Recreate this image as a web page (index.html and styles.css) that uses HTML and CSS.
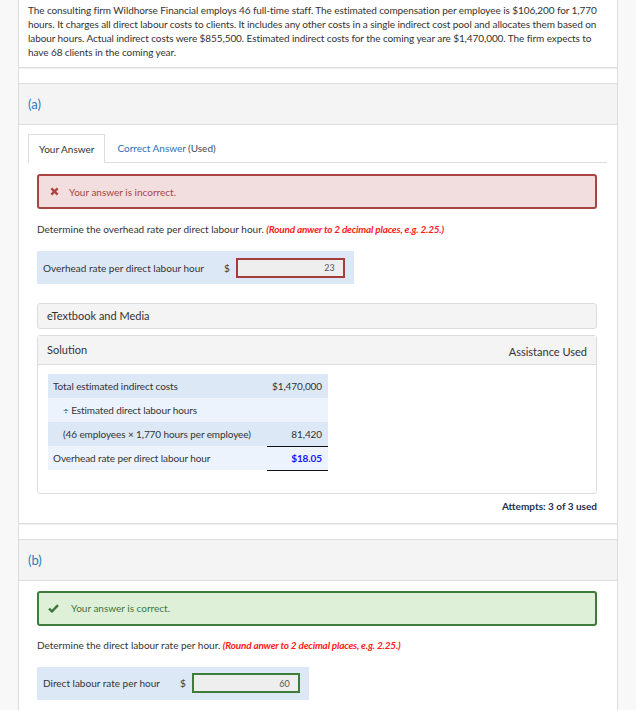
FILE: index.html
```html
<!DOCTYPE html>
<html>
<head>
<meta charset="utf-8">
<link rel="stylesheet" href="styles.css">
</head>
<body>
<div class="wrap">
  <div class="card intro">
    <p><span class="ln">The consulting firm Wildhorse Financial employs 46 full-time staff. The estimated compensation per employee is $106,200 for 1,770</span>
    <span class="ln">hours. It charges all direct labour costs to clients. It includes any other costs in a single indirect cost pool and allocates them based on</span>
    <span class="ln">labour hours. Actual indirect costs were $855,500. Estimated indirect costs for the coming year are $1,470,000. The firm expects to</span>
    <span class="ln">have 68 clients in the coming year.</span></p>
  </div>

  <div class="card part">
    <div class="part-head">(a)</div>
    <div class="part-body">
      <div class="tabs">
        <div class="tab active">Your Answer</div>
        <div class="tab link"><span class="blue">Correct Answer</span> <span class="used">(Used)</span></div>
      </div>
      <div class="tab-panel">
        <div class="alert alert-bad">
          <svg class="icon" width="9" height="9" viewBox="0 0 10 10"><path d="M1.5 1.5 L8.5 8.5 M8.5 1.5 L1.5 8.5" stroke="#a94442" stroke-width="2.6" stroke-linecap="butt" fill="none"/></svg>
          <span>Your answer is incorrect.</span>
        </div>
        <p class="question">Determine the overhead rate per direct labour hour. <em class="hint">(Round anwer to 2 decimal places, e.g. 2.25.)</em></p>
        <div class="answer-row">
          <span class="label">Overhead rate per direct labour hour</span>
          <span class="dollar">$</span>
          <input class="field field-bad" value="23" readonly>
        </div>

        <div class="panel etext">eTextbook and Media</div>

        <div class="panel solution">
          <div class="sol-head"><span>Solution</span><span class="assist">Assistance Used</span></div>
          <div class="sol-body">
            <table class="sol-table">
              <tr class="r1"><td>Total estimated indirect costs</td><td class="num">$1,470,000</td></tr>
              <tr class="r2"><td class="indent">÷ Estimated direct labour hours</td><td class="num"></td></tr>
              <tr class="r1"><td class="indent">(46 employees × 1,770 hours per employee)</td><td class="num">81,420</td></tr>
              <tr class="r2"><td>Overhead rate per direct labour hour</td><td class="num total">$18.05</td></tr>
            </table>
          </div>
        </div>

        <div class="attempts">Attempts: 3 of 3 used</div>
      </div>
    </div>
  </div>

  <div class="card part part-b">
    <div class="part-head">(b)</div>
    <div class="part-body plain">
      <div class="alert alert-good">
        <svg class="icon" width="11" height="9" viewBox="0 0 11 9"><path d="M1 4.6 L4 7.4 L10 1.2" stroke="#3c763d" stroke-width="2.4" fill="none"/></svg>
        <span>Your answer is correct.</span>
      </div>
      <p class="question q-b">Determine the direct labour rate per hour. <em class="hint">(Round anwer to 2 decimal places, e.g. 2.25.)</em></p>
      <div class="answer-row">
        <span class="label">Direct labour rate per hour</span>
        <span class="dollar">$</span>
        <input class="field field-good" value="60" readonly>
      </div>
    </div>
  </div>
</div>
</body>
</html>
```

FILE: styles.css
```css
html, body {
  margin: 0;
  padding: 0;
}
body {
  background: #f8f8f8;
  font-family: Lato, "Noto Sans", sans-serif;
  color: #333;
  font-size: 10px;
  line-height: 14px;
}
.wrap {
  margin-left: 18px;
  width: 598px;
  background: #fff;
  border-left: 1px solid #ddd;
  border-right: 1px solid #ddd;
  height: 710px;
  overflow: hidden;
}
.card {
  background: #fff;
  border-bottom: 1px solid #dcdcdc;
  box-shadow: 0 1px 1px rgba(0,0,0,0.06);
}
.intro {
  padding: 3px 8px 8px 9px;
}
.intro p {
  margin: 0;
  font-size: 10px;
  line-height: 14px;
  letter-spacing: -0.08px;
}
.intro .ln {
  display: block;
  white-space: nowrap;
}
.part {
  margin-top: 15px;
  border-top: 1px solid #ddd;
}
.part-head {
  height: 40px;
  background: #f4f4f4;
  border-bottom: 1px solid #ddd;
  padding-left: 9px;
  display: flex;
  align-items: center;
  font-size: 13px;
  color: #2c7bbf;
}
.part-body {
  padding: 9px 10px 10px 9px;
}
.part-body.plain {
  padding: 10px 20px 10px 18px;
}
.tabs {
  display: flex;
  height: 28px;
  border-bottom: 1px solid #ddd;
}
.tab {
  display: flex;
  align-items: center;
  padding: 0 10px;
  font-size: 10px;
}
.tab.active {
  border: 1px solid #ddd;
  border-bottom: none;
  background: #fff;
  margin-bottom: -1px;
  height: 29px;
  box-sizing: border-box;
  padding: 0 10px;
}
.tab.link {
  padding-left: 12px;
}
.blue {
  color: #2a6fb8;
}
.used {
  color: #3d4b5c;
  margin-left: 2px;
}
.tab-panel {
  padding: 11px 10px 0 9px;
}
.alert {
  height: 35px;
  box-sizing: border-box;
  border: 2px solid;
  border-radius: 3px;
  display: flex;
  align-items: center;
  font-size: 10px;
}
.alert-bad {
  background: #f2dede;
  border-color: #a94442;
  color: #a94442;
  padding-left: 11px;
}
.alert-bad .icon {
  margin-right: 10px;
}
.alert-good {
  background: #dff0d8;
  border-color: #3f7b3a;
  color: #3c763d;
  padding-left: 9px;
}
.alert-good .icon {
  margin-right: 12px;
}
.question {
  margin: 13px 0 0 0;
  font-size: 10px;
  line-height: 14px;
}
.q-b {
  margin-top: 12px;
}
.hint {
  color: #ff1a1a;
  font-weight: bold;
  font-style: italic;
  letter-spacing: -0.2px;
}
.answer-row {
  margin-top: 15px;
  display: flex;
  width: max-content;
  align-items: center;
  height: 33px;
  background: #dde8f7;
  padding: 0 9px 0 6px;
}
.label {
  font-size: 10px;
}
.dollar {
  margin-left: 20px;
  margin-right: 6px;
  font-size: 10px;
}
.field {
  width: 109px;
  height: 20px;
  box-sizing: border-box;
  background: #eee;
  text-align: right;
  font-family: Lato, sans-serif;
  font-size: 9px;
  color: #555;
  padding: 0 8px 0 0;
  margin: 0;
  outline: none;
}
.field-bad {
  border: 2px solid #a63b3b;
}
.field-good {
  border: 2px solid #3f7b3a;
  width: 108px;
}
.panel {
  border: 1px solid #ddd;
  border-radius: 3px;
  font-size: 11px;
}
.etext {
  margin-top: 19px;
  height: 26px;
  box-sizing: border-box;
  background: #f4f4f4;
  display: flex;
  align-items: center;
  padding-left: 9px;
}
.solution {
  margin-top: 6px;
}
.sol-head {
  height: 28px;
  background: #f4f4f4;
  border-bottom: 1px solid #ddd;
  display: flex;
  justify-content: space-between;
  align-items: center;
  padding: 0 9px 0 9px;
}
.assist {
  position: relative;
  top: 2px;
}
.sol-body {
  padding: 9px 10px 22px 10px;
}
.sol-table {
  border-collapse: collapse;
  font-size: 10px;
  letter-spacing: -0.1px;
}
.sol-table td {
  height: 24px;
  padding: 0 0 0 5px;
  box-sizing: border-box;
}
.sol-table td:first-child {
  width: 219px;
}
.sol-table td.indent {
  padding-left: 15px;
}
.sol-table td.num {
  width: 61px;
  text-align: right;
  padding: 0 6px 0 0;
}
.r1 td {
  background: #dde8f7;
}
.r2 td {
  background: #ecf3fd;
}
.sol-table td.total {
  border-top: 1px solid #111;
  border-bottom: 1px solid #111;
  color: #1515ff;
  font-weight: bold;
}
.attempts {
  margin-top: 5px;
  text-align: right;
  font-size: 10px;
  font-weight: bold;
  color: #23304a;
}
```
